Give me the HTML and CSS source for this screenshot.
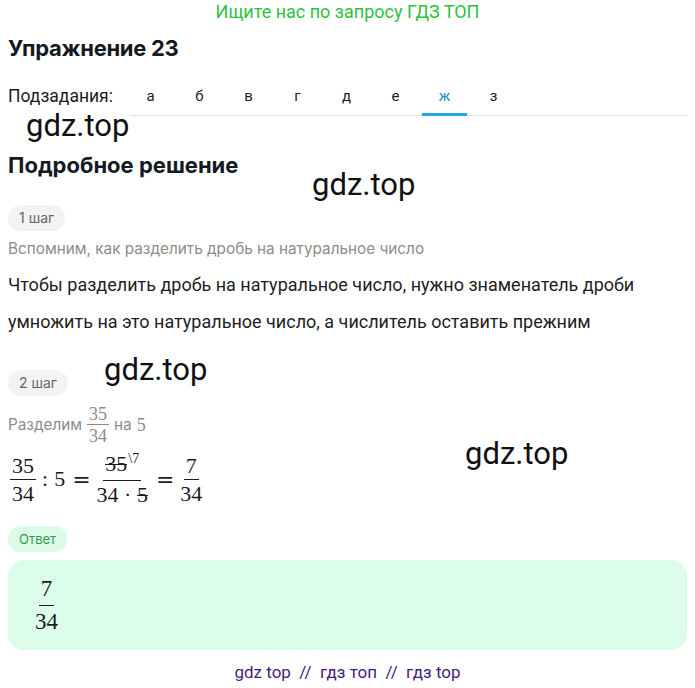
FILE: index.html
```html
<!DOCTYPE html>
<html lang="ru">
<head>
<meta charset="utf-8">
<link rel="stylesheet" href="styles.css">
</head>
<body>
<div class="page">
  <div class="banner">Ищите нас по запросу ГДЗ ТОП</div>
  <h1 class="title">Упражнение 23</h1>
  <div class="tabs">
    <span class="tabs-label">Подзадания:</span>
    <div class="tab-list">
      <span class="tab">а</span>
      <span class="tab">б</span>
      <span class="tab">в</span>
      <span class="tab">г</span>
      <span class="tab">д</span>
      <span class="tab">е</span>
      <span class="tab active">ж</span>
      <span class="tab">з</span>
    </div>
  </div>
  <h2 class="subtitle">Подробное решение</h2>

  <div class="pill">1 шаг</div>
  <p class="hint">Вспомним, как разделить дробь на натуральное число</p>
  <p class="text">Чтобы разделить дробь на натуральное число, нужно знаменатель дроби умножить на это натуральное число, а числитель оставить прежним</p>

  <div class="pill pill-2">2 шаг</div>
  <p class="hint hint-math">Разделим <span class="frac small"><span class="num">35</span><span class="den">34</span></span> на <span class="m">5</span></p>
  <div class="eq">
    <span class="frac"><span class="num">35</span><span class="den">34</span></span>
    <span class="op">:</span><span class="op">5</span><span class="op eqs">=</span>
    <span class="frac"><span class="num"><span class="cancel">35</span><span class="sup">\7</span></span><span class="den">34 · <span class="cancel">5</span></span></span>
    <span class="op eqs">=</span>
    <span class="frac"><span class="num">7</span><span class="den">34</span></span>
  </div>

  <div class="pill pill-green">Ответ</div>
  <div class="answer">
    <span class="frac big"><span class="num">7</span><span class="den">34</span></span>
  </div>

  <div class="footer">gdz top &nbsp;//&nbsp; гдз топ &nbsp;//&nbsp; гдз top</div>

  <span class="wm wm1">gdz.top</span>
  <span class="wm wm2">gdz.top</span>
  <span class="wm wm3">gdz.top</span>
  <span class="wm wm4">gdz.top</span>
</div>
</body>
</html>
```
FILE: styles.css
```css
* { box-sizing: border-box; }
html, body { margin: 0; padding: 0; background: #fff; }
body { font-family: Roboto, "Liberation Sans", sans-serif; color: #1c1c1c; }
.page { position: relative; width: 695px; height: 688px; padding: 0 8px; overflow: hidden; }

.banner { text-align: center; color: #2ac43a; font-size: 18px; line-height: 20px; padding-top: 2px; }
.title { margin: 13px 0 0; font-family: Inter, Roboto, sans-serif; font-size: 22px; font-weight: 700; line-height: 26px; color: #141a22; letter-spacing: -0.3px; }

.tabs { display: flex; align-items: stretch; margin-top: 20px; height: 35px; }
.tabs-label { font-size: 17.5px; line-height: 20px; padding-top: 5px; width: 122px; flex: none; }
.tab-list { display: flex; flex: 1; border-bottom: 1px solid #e4e4e4; }
.tab { width: 49px; flex: none; text-align: center; font-size: 15px; line-height: 20px; padding-top: 5px; color: #222; position: relative; }
.tab:first-child { margin-left: -4px; }
.tab.active { color: #2a90c8; }
.tab.active::after { content: ""; position: absolute; left: 2px; right: 2px; bottom: -1px; height: 3px; background: #1fa6e6; }

.subtitle { margin: 36px 0 0; font-family: Inter, Roboto, sans-serif; font-size: 22px; font-weight: 700; line-height: 26px; color: #141a22; }

.pill { display: inline-block; margin-top: 27px; height: 26px; line-height: 26px; padding: 0 11px; border-radius: 13px; background: #f2f3f5; color: #666; font-family: Inter, Roboto, sans-serif; font-size: 14px; }
.hint { margin: 8px 0 0; font-family: Inter, Roboto, sans-serif; font-size: 15.3px; line-height: 20px; color: #8c8c8c; }
.text { margin: 7px 0 0; font-size: 18px; line-height: 37px; color: #1e1e1e; }

.pill-2 { margin-top: 30px; }
.hint-math { margin-top: 9px; display: flex; align-items: center; gap: 5px; }
.m { font-family: "Liberation Serif", serif; font-size: 18px; }

.frac { display: inline-flex; flex-direction: column; align-items: center; font-family: "Liberation Serif", "DejaVu Serif", serif; font-size: 22px; line-height: 23px; color: #1c1c1c; }
.frac .num { padding: 0 2px 2px; border-bottom: 1px solid #1c1c1c; position: relative; }
.frac .den { padding: 2px 2px 0; }
.frac.small { font-size: 18px; line-height: 18px; color: #8c8c8c; }
.frac.small .num { border-bottom-color: #8c8c8c; padding-bottom: 1px; }
.frac.big { font-size: 23px; line-height: 24px; }
.frac.big .num { padding-bottom: 4px; }
.frac.big .den { padding-top: 4px; }

.eq { display: flex; align-items: center; gap: 0; margin-top: 7px; margin-left: 2px; font-family: "Liberation Serif", serif; font-size: 22px; }
.eq .op { padding: 0 3px; }
.eq .frac + .op { padding-left: 6px; }
.eq .eqs { font-family: "DejaVu Serif", serif; font-size: 22px; padding: 0 4px; }
.cancel { position: relative; }
.cancel::after { content: ""; position: absolute; left: 0; right: 0; top: 52%; border-top: 1px solid #1c1c1c; }
.sup { font-size: 14px; position: relative; top: -8px; margin-left: 1px; }

.pill-green { display: block; width: max-content; margin-top: 20px; background: #dcfbe6; color: #2f9a55; font-size: 13px; }
.answer { margin-top: 8px; height: 90px; border-radius: 16px; background: #dcfde9; display: flex; align-items: center; padding-left: 25px; }

.footer { text-align: center; margin-top: 12px; color: #4a1a7c; font-size: 17px; line-height: 20px; }

.wm { position: absolute; font-family: Roboto, "Liberation Sans", sans-serif; font-size: 31px; line-height: 34px; color: #111; }
.wm1 { left: 26px; top: 109px; }
.wm2 { left: 312px; top: 168px; }
.wm3 { left: 104px; top: 353px; }
.wm4 { left: 465px; top: 437px; }
```
